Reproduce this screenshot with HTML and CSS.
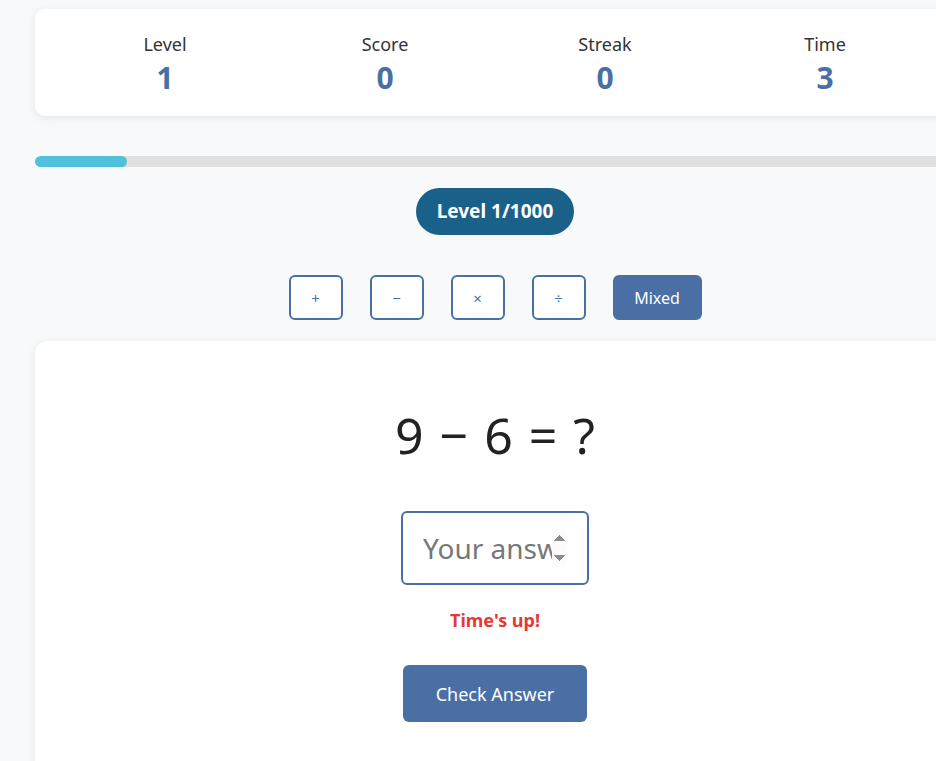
FILE: index.html
```html
<!DOCTYPE html>
<html lang="en">
<head>
<meta charset="utf-8">
<title>Math Game</title>
<link rel="stylesheet" href="styles.css">
</head>
<body>
<div class="container">
  <div class="stats">
    <div class="stat"><div class="stat-label">Level</div><div class="stat-value">1</div></div>
    <div class="stat"><div class="stat-label">Score</div><div class="stat-value">0</div></div>
    <div class="stat"><div class="stat-label">Streak</div><div class="stat-value">0</div></div>
    <div class="stat"><div class="stat-label">Time</div><div class="stat-value">3</div></div>
  </div>
  <div class="progress"><div class="progress-fill" style="width:10%"></div></div>
  <div class="badge-row"><span class="badge">Level 1/1000</span></div>
  <div class="ops">
    <button class="op">+</button>
    <button class="op">−</button>
    <button class="op">×</button>
    <button class="op">÷</button>
    <button class="op op-active">Mixed</button>
  </div>
  <div class="game">
    <div class="equation">9 − 6 = ?</div>
    <input class="answer" type="number" placeholder="Your answer" autofocus>
    <div class="feedback">Time's up!</div>
    <button class="check">Check Answer</button>
  </div>
</div>
</body>
</html>
```
FILE: styles.css
```css
* { box-sizing: border-box; }
html, body { margin: 0; padding: 0; }
body {
  background: #f7f9fb;
  font-family: "Noto Sans", "Open Sans", sans-serif;
  color: #333;
  overflow: hidden;
}
.container {
  width: 920px;
  margin-left: 35px;
  padding-top: 9px;
}
.stats {
  background: #fff;
  border-radius: 10px;
  box-shadow: 0 2px 10px rgba(0,0,0,0.08);
  padding: 22px 20px 19px;
  display: grid;
  grid-template-columns: repeat(4, 1fr);
  text-align: center;
}
.stat-label { font-size: 18px; line-height: 26px; color: #333; }
.stat-value { margin-top: 2px; font-size: 30px; line-height: 38px; font-weight: 700; color: #4a6fa5; }
.progress {
  margin-top: 40px;
  height: 11px;
  background: #e0e0e0;
  border-radius: 6px;
  overflow: hidden;
}
.progress-fill { height: 100%; background: #4fc1db; border-radius: 6px; }
.badge-row { display: flex; justify-content: center; margin-top: 21px; }
.badge {
  background: #1a6189;
  color: #fff;
  font-weight: 700;
  font-size: 19px;
  line-height: 27px;
  padding: 10px 21px;
  border-radius: 24px;
}
.ops {
  display: flex;
  justify-content: center;
  gap: 27px;
  margin-top: 40px;
}
.op {
  width: 54px;
  height: 45px;
  border: 2px solid #4a6fa5;
  border-radius: 6px;
  background: #fff;
  color: #4a6fa5;
  font-family: inherit;
  font-size: 15px;
  cursor: pointer;
}
.op-active {
  width: 89px;
  background: #4a6fa5;
  color: #fff;
  font-size: 16px;
}
.game {
  margin-top: 21px;
  background: #fff;
  border-radius: 12px;
  box-shadow: 0 2px 10px rgba(0,0,0,0.08);
  padding: 58px 20px 40px;
  display: flex;
  flex-direction: column;
  align-items: center;
  min-height: 440px;
}
.equation {
  font-size: 50px;
  line-height: 72px;
  color: #222;
  word-spacing: 3px;
}
.answer {
  margin-top: 40px;
  width: 188px;
  height: 74px;
  border: 2px solid #4a6fa5;
  border-radius: 6px;
  padding: 0 20px;
  font-family: inherit;
  font-size: 28px;
  text-align: center;
  color: #222;
  outline: none;
}
.answer::placeholder { color: #777; }
.feedback {
  margin-top: 22px;
  color: #e53935;
  font-weight: 700;
  font-size: 18px;
  line-height: 26px;
}
.check {
  margin-top: 32px;
  background: #4a6fa5;
  color: #fff;
  border: none;
  border-radius: 6px;
  width: 184px;
  height: 57px;
  font-family: inherit;
  font-size: 18px;
  cursor: pointer;
}
```
